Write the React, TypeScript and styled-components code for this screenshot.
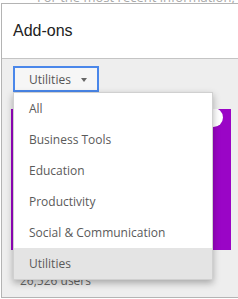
import React from "react";
import styled, { createGlobalStyle } from "styled-components";

const Global = createGlobalStyle`
  html, body { margin: 0; padding: 0; background: #ffffff; overflow: hidden; }
  body { width: 238px; height: 299px; }
`;

const Page = styled.div`
  position: relative;
  width: 238px;
  height: 299px;
  overflow: hidden;
`;

const BackdropText = styled.div`
  height: 3px;
  overflow: hidden;
  padding-left: 37px;
  font-family: "Open Sans", sans-serif;
  font-size: 13px;
  color: #a8a8a8;
  white-space: nowrap;
  line-height: 14px;
  & > span { display: block; margin-top: -10px; }
`;

const Dialog = styled.div`
  margin-left: 1px;
  width: 260px;
  height: 295px;
  border: 1px solid #b4b4b4;
  display: flex;
  flex-direction: column;
  background: #eeeeee;
  box-sizing: border-box;
`;

const Header = styled.div`
  height: 54px;
  flex: none;
  background: #ffffff;
  border-bottom: 1px solid #c4c4c4;
  box-sizing: content-box;
  padding-left: 11px;
  display: flex;
  align-items: center;
  font-family: "Liberation Sans", Arial, sans-serif;
  font-size: 16px;
  color: #222222;
`;

const Body = styled.div`
  position: relative;
  flex: 1;
  padding: 7px 0 0 9px;
  display: flex;
  flex-direction: column;
  align-items: flex-start;
`;

const Select = styled.button`
  width: 86px;
  height: 26px;
  margin-left: 2px;
  border: 2px solid #4a87ea;
  background: #f6f6f6;
  box-sizing: border-box;
  display: flex;
  align-items: center;
  padding: 0 0 0 14px;
  gap: 10px;
  font-family: "Open Sans", sans-serif;
  font-size: 12px;
  color: #555555;
  cursor: pointer;
`;

const Arrow = styled.span`
  width: 0;
  height: 0;
  border-left: 3.5px solid transparent;
  border-right: 3.5px solid transparent;
  border-top: 4px solid #666666;
  margin-top: 1px;
`;

const Card = styled.div`
  position: relative;
  margin-top: 17px;
  width: 220px;
  height: 141px;
  background: #9a05c6;
  overflow: hidden;
`;

const Dot = styled.div`
  position: absolute;
  right: 8px;
  top: -1px;
  width: 19px;
  height: 19px;
  border-radius: 50%;
  background: #ffffff;
`;

const Users = styled.div`
  margin-top: 22px;
  padding-left: 9px;
  font-family: "Open Sans", sans-serif;
  font-size: 12px;
  color: #666666;
`;

const Menu = styled.ul`
  position: absolute;
  left: 11px;
  top: 33px;
  width: 200px;
  margin: 0;
  padding: 0;
  list-style: none;
  background: #ffffff;
  border: 1px solid #d0d0d0;
  box-shadow: 0 3px 7px rgba(0, 0, 0, 0.3);
  box-sizing: border-box;
`;

const Item = styled.li<{ $active?: boolean }>`
  height: 31px;
  line-height: 31px;
  padding-left: 15px;
  font-family: "Open Sans", sans-serif;
  font-size: 12px;
  color: #5a5a5a;
  background: ${(p) => (p.$active ? "#e4e4e4" : "#ffffff")};
  white-space: nowrap;
`;

const items = [
  "All",
  "Business Tools",
  "Education",
  "Productivity",
  "Social & Communication",
  "Utilities",
];

export default function App() {
  return (
    <Page>
      <Global />
      <BackdropText>
        <span>For the most recent information, check the add-ons store</span>
      </BackdropText>
      <Dialog>
        <Header>Add-ons</Header>
        <Body>
          <Select>
            Utilities
            <Arrow />
          </Select>
          <Card>
            <Dot />
          </Card>
          <Users>26,526 users</Users>
          <Menu>
            {items.map((it) => (
              <Item key={it} $active={it === "Utilities"}>
                {it}
              </Item>
            ))}
          </Menu>
        </Body>
      </Dialog>
    </Page>
  );
}
